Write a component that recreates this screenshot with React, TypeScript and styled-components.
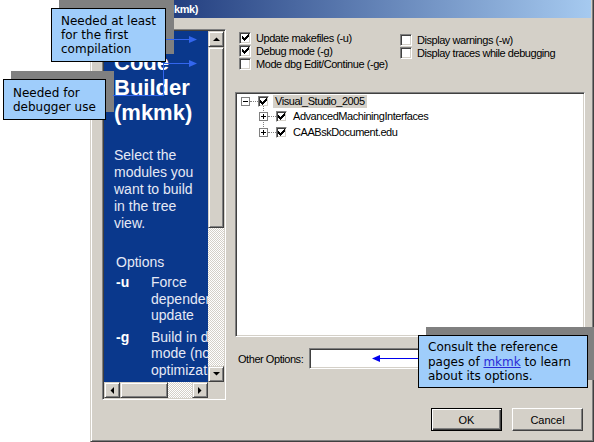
import React from "react";
import styled, { createGlobalStyle, css } from "styled-components";

const FACE = "#d4d0c8";
const SHADOW = "#808080";
const DARK = "#404040";
const UI_FONT = `"Liberation Sans", Arial, sans-serif`;
const NOTE_FONT = `"DejaVu Sans", Verdana, sans-serif`;

const GlobalStyle = createGlobalStyle`
  html, body { margin: 0; padding: 0; background: #fff; }
  body { font-family: ${UI_FONT}; }
  * { box-sizing: border-box; }
`;

const raised = css`
  background: ${FACE};
  border: 1px solid;
  border-color: ${FACE} ${DARK} ${DARK} ${FACE};
  box-shadow: inset 1px 1px #fff, inset -1px -1px ${SHADOW};
`;

const sunken = css`
  border: 1px solid;
  border-color: ${SHADOW} #fff #fff ${SHADOW};
  box-shadow: inset 1px 1px ${DARK}, inset -1px -1px ${FACE};
`;

const checker = css`
  background-color: #fff;
  background-image: conic-gradient(${FACE} 25%, #fff 0 50%, ${FACE} 0 75%, #fff 0);
  background-size: 2px 2px;
`;

const uiText = css`
  font-family: ${UI_FONT};
  font-size: 11px;
  letter-spacing: -0.45px;
  color: #000;
  white-space: nowrap;
`;

/* ---------- page + dialog frame ---------- */

const Page = styled.div`
  position: relative;
  width: 594px;
  height: 442px;
  display: flex;
  overflow: hidden;
  background: #fff;
`;

const Gutter = styled.div`
  width: 90px;
  flex: none;
`;

const Dialog = styled.div`
  width: 504px;
  height: 442px;
  flex: none;
  display: flex;
  flex-direction: column;
  background: ${FACE};
  border-style: solid;
  border-width: 0 1px 1px 1px;
  border-color: ${DARK} ${DARK} ${DARK} ${FACE};
  box-shadow: inset 1px 0 #fff, inset -1px -1px ${SHADOW};
  padding: 0 2px 2px 1px;
`;

const TitleBar = styled.div`
  height: 18px;
  flex: none;
  display: flex;
  align-items: center;
  padding-left: 3px;
  background: linear-gradient(90deg, #0a246a, #a6caf0);
`;

const TitleText = styled.span`
  font-family: ${UI_FONT};
  font-weight: bold;
  font-size: 11px;
  letter-spacing: -0.4px;
  color: #fff;
  white-space: nowrap;
`;

const Body = styled.div`
  display: flex;
  gap: 9px;
  padding: 11px 0 0 10px;
`;

/* ---------- left info panel ---------- */

const InfoPanel = styled.div`
  ${sunken};
  width: 124px;
  height: 371px;
  flex: none;
  padding: 1px;
  display: grid;
  grid-template-columns: 104px 16px;
  grid-template-rows: 351px 16px;
`;

const Viewport = styled.div`
  background: #0a388c;
  overflow: hidden;
`;

const InfoContent = styled.div`
  width: 200px;
  padding: 19px 0 0 10px;
  font-family: ${UI_FONT};
  color: #e6e9f5;
`;

const InfoTitle = styled.div`
  width: 92px;
  font-size: 22px;
  line-height: 25px;
  font-weight: bold;
  color: #fff;
`;

const InfoText = styled.p`
  margin: 22px 0 0;
  width: 90px;
  font-size: 14px;
  line-height: 17px;
`;

const OptionsBlock = styled.div`
  margin-top: 22px;
  padding-left: 2px;
`;

const OptionsHeading = styled.div`
  font-size: 14px;
  line-height: 17px;
`;

const OptionTable = styled.div`
  margin-top: 3px;
  display: grid;
  grid-template-columns: 35px 100px;
  row-gap: 5px;
  font-size: 14px;
  line-height: 16.5px;
`;

const OptionFlag = styled.div`
  font-weight: bold;
  color: #fff;
`;

const OptionDesc = styled.div``;

const VScroll = styled.div`
  display: flex;
  flex-direction: column;
  ${checker};
`;

const HScroll = styled.div`
  display: flex;
  ${checker};
`;

const ScrollButton = styled.div`
  ${raised};
  width: 16px;
  height: 16px;
  flex: none;
  display: flex;
  align-items: center;
  justify-content: center;
`;

const Thumb = styled.div<{ $vertical?: boolean }>`
  ${raised};
  flex: none;
  ${(p) => (p.$vertical ? "width: 16px;" : "height: 16px;")}
`;

const Track = styled.div`
  flex: 1;
`;

const Corner = styled.div`
  background: ${FACE};
`;

type Dir = "up" | "down" | "left" | "right";

const ArrowGlyph = ({ dir }: { dir: Dir }) => {
  const vertical = dir === "up" || dir === "down";
  const pts: Record<Dir, string> = {
    up: "0,4 7,4 3.5,0.5",
    down: "0,0 7,0 3.5,3.5",
    left: "4,0 4,7 0.5,3.5",
    right: "0,0 0,7 3.5,3.5",
  };
  return (
    <svg width={vertical ? 7 : 4} height={vertical ? 4 : 7} viewBox={vertical ? "0 0 7 4" : "0 0 4 7"}>
      <polygon points={pts[dir]} fill="#000" />
    </svg>
  );
};

/* ---------- right column ---------- */

const MainColumn = styled.div`
  width: 350px;
  flex: none;
  display: flex;
  flex-direction: column;
`;

const OptionGrid = styled.div`
  margin-top: 2px;
  padding-left: 4px;
  display: grid;
  grid-template-columns: 161px 1fr;
`;

const OptionCol = styled.div<{ $offset?: number }>`
  display: flex;
  flex-direction: column;
  margin-top: ${(p) => p.$offset ?? 0}px;
`;

const CheckRow = styled.label`
  ${uiText};
  height: 13px;
  display: flex;
  align-items: center;
  gap: 5px;
`;

const CheckBoxFrame = styled.span<{ $size: number }>`
  ${sunken};
  width: ${(p) => p.$size}px;
  height: ${(p) => p.$size}px;
  flex: none;
  background: #fff;
  display: flex;
  align-items: center;
  justify-content: center;
`;

const Check = ({ checked, size = 12 }: { checked?: boolean; size?: number }) => (
  <CheckBoxFrame $size={size}>
    {checked && (
      <svg width="7" height="7" viewBox="0 0 7 7" shapeRendering="crispEdges">
        <polygon points="0,2 2,4 7,-1 7,2 2,7 0,5" fill="#000" />
      </svg>
    )}
  </CheckBoxFrame>
);

const TreeBox = styled.div`
  ${sunken};
  margin-top: 22px;
  height: 245px;
  background: #fff;
  padding: 1px;
`;

const TreeRow = styled.div<{ $depth: number }>`
  height: ${(p) => (p.$depth === 0 ? 14 : 16)}px;
  display: flex;
  align-items: center;
  padding-left: ${(p) => 4 + p.$depth * 18}px;
`;

const ChildGroup = styled.div`
  position: relative;
  &::before {
    content: "";
    position: absolute;
    left: 26px;
    top: -2px;
    height: 25px;
    border-left: 1px dotted ${SHADOW};
  }
`;

const ExpanderBox = styled.span`
  position: relative;
  width: 9px;
  height: 9px;
  flex: none;
  border: 1px solid ${SHADOW};
  background: #fff;
  display: flex;
`;

const Expander = ({ open }: { open?: boolean }) => (
  <ExpanderBox>
    <svg width="7" height="7" viewBox="0 0 7 7" shapeRendering="crispEdges">
      <line x1="1" y1="3.5" x2="6" y2="3.5" stroke="#000" strokeWidth="1" />
      {!open && <line x1="3.5" y1="1" x2="3.5" y2="6" stroke="#000" strokeWidth="1" />}
    </svg>
  </ExpanderBox>
);

const Connector = styled.span`
  width: 8px;
  flex: none;
  border-top: 1px dotted ${SHADOW};
`;

const TreeLabel = styled.span<{ $selected?: boolean }>`
  ${uiText};
  margin-left: 4px;
  padding: 0 2px;
  height: 13px;
  line-height: 13px;
  background: ${(p) => (p.$selected ? FACE : "transparent")};
`;

const OtherRow = styled.div`
  margin-top: 11px;
  height: 21px;
  display: flex;
  align-items: center;
`;

const OtherLabel = styled.span`
  ${uiText};
  margin-left: 3px;
  width: 71px;
  flex: none;
`;

const OtherInput = styled.input`
  ${sunken};
  flex: 1;
  height: 21px;
  background: #fff;
  outline: none;
  padding: 2px 3px;
  ${uiText};
`;

const ButtonRow = styled.div`
  margin-top: 39px;
  display: flex;
  justify-content: flex-end;
  gap: 10px;
  padding-right: 2px;
`;

const PushButton = styled.button<{ $default?: boolean }>`
  width: 71px;
  height: 23px;
  padding: 0;
  background: ${FACE};
  font-family: ${UI_FONT};
  font-size: 11px;
  color: #000;
  border: 1px solid;
  ${(p) =>
    p.$default
      ? css`
          border-color: #000;
          box-shadow: inset 1px 1px #fff, inset -1px -1px ${DARK}, inset -2px -2px ${SHADOW};
        `
      : css`
          border-color: #fff ${DARK} ${DARK} #fff;
          box-shadow: inset -1px -1px ${SHADOW};
        `}
`;

/* ---------- annotations ---------- */

const Callout = styled.div<{ $x: number; $y: number; $w: number; $h: number; $pt: number; $lh: number }>`
  position: absolute;
  left: ${(p) => p.$x}px;
  top: ${(p) => p.$y}px;
  width: ${(p) => p.$w}px;
  height: ${(p) => p.$h}px;
  padding: ${(p) => p.$pt}px 0 0 9px;
  background: #9fcdfb;
  border: 1px solid #000;
  box-shadow: 8px -8px 0 ${SHADOW};
  font-family: ${NOTE_FONT};
  font-size: 12px;
  line-height: ${(p) => p.$lh}px;
  color: #000;
  white-space: nowrap;
`;

const NoteLink = styled.span`
  color: #2a2ad6;
  text-decoration: underline;
`;

const ArrowLayer = styled.svg`
  position: absolute;
  left: 0;
  top: 0;
  pointer-events: none;
`;

export default function App() {
  return (
    <>
      <GlobalStyle />
      <Page>
        <Gutter />
        <Dialog>
          <TitleBar>
            <TitleText>Code Builder (mkmk)</TitleText>
          </TitleBar>
          <Body>
            <InfoPanel>
              <Viewport>
                <InfoContent>
                  <InfoTitle>Code Builder (mkmk)</InfoTitle>
                  <InfoText>Select the modules you want to build in the tree view.</InfoText>
                  <OptionsBlock>
                    <OptionsHeading>Options</OptionsHeading>
                    <OptionTable>
                      <OptionFlag>-u</OptionFlag>
                      <OptionDesc>Force dependency update</OptionDesc>
                      <OptionFlag>-g</OptionFlag>
                      <OptionDesc>Build in debug mode (no optimization)</OptionDesc>
                    </OptionTable>
                  </OptionsBlock>
                </InfoContent>
              </Viewport>
              <VScroll>
                <ScrollButton>
                  <ArrowGlyph dir="up" />
                </ScrollButton>
                <Thumb $vertical style={{ height: 181 }} />
                <Track />
                <ScrollButton>
                  <ArrowGlyph dir="down" />
                </ScrollButton>
              </VScroll>
              <HScroll>
                <ScrollButton>
                  <ArrowGlyph dir="left" />
                </ScrollButton>
                <Thumb style={{ width: 48 }} />
                <Track />
                <ScrollButton>
                  <ArrowGlyph dir="right" />
                </ScrollButton>
              </HScroll>
              <Corner />
            </InfoPanel>

            <MainColumn>
              <OptionGrid>
                <OptionCol>
                  <CheckRow>
                    <Check checked />
                    Update makefiles (-u)
                  </CheckRow>
                  <CheckRow>
                    <Check checked />
                    Debug mode (-g)
                  </CheckRow>
                  <CheckRow>
                    <Check />
                    Mode dbg Edit/Continue (-ge)
                  </CheckRow>
                </OptionCol>
                <OptionCol $offset={2}>
                  <CheckRow>
                    <Check />
                    Display warnings (-w)
                  </CheckRow>
                  <CheckRow>
                    <Check />
                    Display traces while debugging
                  </CheckRow>
                </OptionCol>
              </OptionGrid>

              <TreeBox>
                <TreeRow $depth={0}>
                  <Expander open />
                  <Connector />
                  <Check checked size={11} />
                  <TreeLabel $selected>Visual_Studio_2005</TreeLabel>
                </TreeRow>
                <ChildGroup>
                  <TreeRow $depth={1}>
                    <Expander />
                    <Connector />
                    <Check checked size={11} />
                    <TreeLabel>AdvancedMachiningInterfaces</TreeLabel>
                  </TreeRow>
                  <TreeRow $depth={1}>
                    <Expander />
                    <Connector />
                    <Check checked size={11} />
                    <TreeLabel>CAABskDocument.edu</TreeLabel>
                  </TreeRow>
                </ChildGroup>
              </TreeBox>

              <OtherRow>
                <OtherLabel>Other Options:</OtherLabel>
                <OtherInput defaultValue="" />
              </OtherRow>

              <ButtonRow>
                <PushButton $default>OK</PushButton>
                <PushButton>Cancel</PushButton>
              </ButtonRow>
            </MainColumn>
          </Body>
        </Dialog>

        <Callout $x={51} $y={8} $w={115} $h={54} $pt={5} $lh={14}>
          Needed at least
          <br />
          for the first
          <br />
          compilation
        </Callout>
        <Callout $x={3} $y={79} $w={103} $h={41} $pt={6} $lh={14}>
          Needed for
          <br />
          debugger use
        </Callout>
        <Callout $x={418} $y={335} $w={170} $h={53} $pt={4} $lh={14.5}>
          Consult the reference
          <br />
          pages of <NoteLink>mkmk</NoteLink> to learn
          <br />
          about its options.
        </Callout>

        <ArrowLayer width="594" height="442" viewBox="0 0 594 442">
          <g stroke="#3366ee" strokeWidth="1" fill="none" shapeRendering="crispEdges">
            <path d="M166 39.5 H190" />
            <path d="M113 95.5 H163.5 V63.5 H190" />
          </g>
          <polygon points="189,36 197,39.5 189,43" fill="#3366ee" />
          <polygon points="189,60 197,63.5 189,67" fill="#3366ee" />
          <path d="M379 358.5 H418" stroke="#0000ee" strokeWidth="1" shapeRendering="crispEdges" />
          <polygon points="380,355 372,358.5 380,362" fill="#0000ee" />
        </ArrowLayer>
      </Page>
    </>
  );
}
